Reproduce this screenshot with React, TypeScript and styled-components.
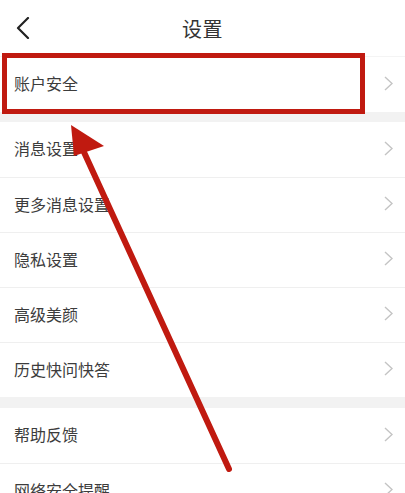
import { createGlobalStyle, styled } from 'styled-components';

const GlobalStyle = createGlobalStyle`
  html, body {
    margin: 0;
    padding: 0;
    background: #fff;
    font-family: "Noto Sans CJK SC", "Noto Sans", sans-serif;
  }
`;

const groups = [
  ['账户安全'],
  ['消息设置', '更多消息设置', '隐私设置', '高级美颜', '历史快问快答'],
  ['帮助反馈', '网络安全提醒'],
];

export default function App() {
  return (
    <Page>
      <GlobalStyle />
      <Header>
        <BackBtn>
          <svg width="14" height="22" viewBox="0 0 14 22">
            <path d="M12 1 L2 11 L12 21" fill="none" stroke="#222" strokeWidth="2.2" strokeLinecap="round" strokeLinejoin="round" />
          </svg>
        </BackBtn>
        <Title>设置</Title>
      </Header>
      {groups.map((items, gi) => (
        <Group key={gi} $first={gi === 0}>
          {items.map((label, i) => (
            <Row key={label} $first={i === 0}>
              <Label>{label}</Label>
              <Chevron width="9" height="15" viewBox="0 0 9 15">
                <path d="M1 1 L8 7.5 L1 14" fill="none" stroke="#c4c4c4" strokeWidth="1.4" />
              </Chevron>
              {gi === 0 && <Highlight />}
            </Row>
          ))}
        </Group>
      ))}
      <ArrowLayer width="405" height="493" viewBox="0 0 405 493">
        <line x1="229" y1="469" x2="83" y2="150" stroke="#c01a10" strokeWidth="6" strokeLinecap="round" />
        <polygon points="71,125 104,146 74,156" fill="#c01a10" />
      </ArrowLayer>
    </Page>
  );
}

const Page = styled.div`
  position: relative;
  width: 405px;
  height: 493px;
  overflow: hidden;
  background: #fff;
`;

const Header = styled.div`
  height: 56px;
  display: flex;
  align-items: center;
  justify-content: center;
  position: relative;
`;

const BackBtn = styled.div`
  position: absolute;
  left: 16px;
  top: 17px;
  display: flex;
`;

const Title = styled.h1`
  margin: 0;
  font-size: 20px;
  font-weight: 400;
  color: #333;
  letter-spacing: 0.5px;
`;

const Group = styled.div<{ $first: boolean }>`
  border-top: ${(p) => (p.$first ? '1px solid #f4f4f4' : 'none')};
  & + & {
    border-top: 11px solid #f2f2f2;
  }
  &:nth-child(3) {
    border-top-width: 10px;
  }
`;

const Row = styled.div<{ $first: boolean }>`
  position: relative;
  height: 55px;
  display: flex;
  align-items: center;
  padding: 0 12px 3px 14px;
  box-sizing: border-box;
  height: 55px;
  border-top: ${(p) => (p.$first ? 'none' : '1px solid #efefef')};
`;

const Label = styled.span`
  flex: 1;
  font-size: 16px;
  color: #3c3c3c;
`;

const Chevron = styled.svg`
  display: block;
`;

const Highlight = styled.div`
  position: absolute;
  top: -4px;
  left: 2px;
  right: 40px;
  bottom: -2px;
  border: 5px solid #c01a10;
  box-sizing: border-box;
  pointer-events: none;
`;

const ArrowLayer = styled.svg`
  position: absolute;
  top: 0;
  left: 0;
  pointer-events: none;
`;
